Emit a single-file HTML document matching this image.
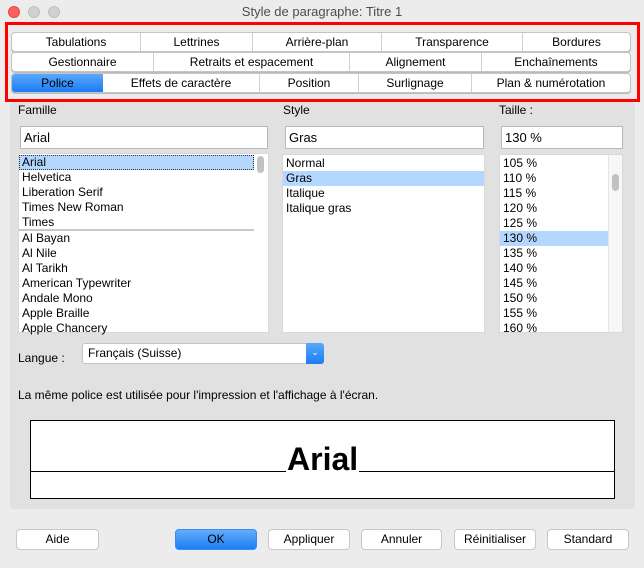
<!DOCTYPE html>
<html><head><meta charset="utf-8"><style>
*{box-sizing:border-box;margin:0;padding:0}
body{width:644px;height:568px;background:#ececec;font-family:"Liberation Sans",Arial,sans-serif;font-size:12px;color:#000;position:relative;overflow:hidden}
.a{position:absolute}
.title{left:0;top:0;width:644px;height:22px;text-align:center;line-height:24px;font-size:13px;color:#4d4d4d}
.dot{width:12px;height:12px;border-radius:50%;top:6px;background:#d0d0d0;border:1px solid #c0c0c0}
.red{left:5px;top:22px;width:635px;height:80px;border:3px solid #f00}
.row{left:11px;width:620px;height:20px;background:#fff;border:1px solid #c4c4c4;border-radius:4px;display:flex;overflow:hidden;box-shadow:0 1px 0 #bbb}
.row div{height:100%;text-align:center;line-height:18px;font-size:12px;border-right:1px solid #d0d0d0}
.row div:last-child{border-right:none}
.panel{left:10px;top:102px;width:625px;height:407px;background:#e1e1e1;border-radius:3px}
.in{background:#fff;border:1px solid #b8b8b8;height:23px;line-height:21px;padding-left:3px;font-size:13px}
.list{background:#fff;border:1px solid #d8d8d8}
.it{height:15px;line-height:15px;padding-left:3px;font-size:12px;white-space:nowrap}
.sel{background:#b3d7ff}
.btn{top:529px;height:21px;background:#fff;border:1px solid #c8c8c8;border-radius:4px;text-align:center;line-height:19px;font-size:12px}
</style></head><body>
<div class="a title">Style de paragraphe: Titre 1</div>
<div class="a dot" style="left:8px;background:#fc605c;border-color:#de4a45"></div>
<div class="a dot" style="left:28px"></div>
<div class="a dot" style="left:48px"></div>

<div class="a panel"></div>
<div class="a red"></div>
<div class="a row" style="top:32px"><div style="width:129px">Tabulations</div><div style="width:112px">Lettrines</div><div style="width:129px">Arrière-plan</div><div style="width:141px">Transparence</div><div style="flex:1">Bordures</div></div>
<div class="a row" style="top:52px"><div style="width:142px">Gestionnaire</div><div style="width:196px">Retraits et espacement</div><div style="width:132px">Alignement</div><div style="flex:1">Enchaînements</div></div>
<div class="a row" style="top:73px"><div style="width:91px;background:linear-gradient(#5aa8fb,#1a7cf5);color:#000;border-right:none">Police</div><div style="width:157px">Effets de caractère</div><div style="width:99px">Position</div><div style="width:113px">Surlignage</div><div style="flex:1">Plan &amp; numérotation</div></div>

<div class="a" style="left:18px;top:103px">Famille</div>
<div class="a" style="left:283px;top:103px">Style</div>
<div class="a" style="left:499px;top:103px">Taille :</div>

<div class="a in" style="left:20px;top:126px;width:248px">Arial</div>
<div class="a in" style="left:285px;top:126px;width:199px">Gras</div>
<div class="a in" style="left:501px;top:126px;width:122px">130 %</div>

<div class="a list" style="left:18px;top:153px;width:251px;height:180px;padding-top:1px">
<div class="it sel" style="width:235px;outline:1px dotted #333;outline-offset:-1px">Arial</div>
<div class="it">Helvetica</div><div class="it">Liberation Serif</div><div class="it">Times New Roman</div><div class="it" style="border-bottom:2px solid #c8c8c8;width:235px;height:16px">Times</div>
<div class="it">Al Bayan</div><div class="it">Al Nile</div><div class="it">Al Tarikh</div><div class="it">American Typewriter</div><div class="it">Andale Mono</div><div class="it">Apple Braille</div><div class="it">Apple Chancery</div>
<div class="a" style="left:238px;top:2px;width:7px;height:17px;border-radius:4px;background:#c1c1c1"></div>
</div>
<div class="a list" style="left:282px;top:154px;width:203px;height:179px;padding-top:1px">
<div class="it">Normal</div><div class="it sel">Gras</div><div class="it">Italique</div><div class="it">Italique gras</div>
</div>
<div class="a list" style="left:499px;top:154px;width:124px;height:179px;padding-top:1px;overflow:hidden">
<div class="it">105 %</div><div class="it">110 %</div><div class="it">115 %</div><div class="it">120 %</div><div class="it">125 %</div><div class="it sel" style="width:108px">130 %</div><div class="it">135 %</div><div class="it">140 %</div><div class="it">145 %</div><div class="it">150 %</div><div class="it">155 %</div><div class="it">160 %</div>
<div class="a" style="left:108px;top:0;width:15px;height:179px;background:#f7f7f7;border-left:1px solid #e6e6e6"></div>
<div class="a" style="left:112px;top:19px;width:7px;height:17px;border-radius:4px;background:#c1c1c1"></div>
</div>

<div class="a" style="left:18px;top:351px">Langue :</div>
<div class="a" style="left:82px;top:343px;width:242px;height:21px;background:#fff;border:1px solid #c4c4c4;border-radius:3px;line-height:19px;padding-left:5px">Français (Suisse)</div>
<div class="a" style="left:306px;top:343px;width:18px;height:21px;background:linear-gradient(#5aa8fb,#1a7cf5);border-radius:0 3px 3px 0;color:#fff;text-align:center;line-height:19px;font-size:9px">&#8964;</div>

<div class="a" style="left:18px;top:388px">La même police est utilisée pour l'impression et l'affichage à l'écran.</div>

<div class="a" style="left:30px;top:420px;width:585px;height:79px;background:#fff;border:1px solid #000"></div>
<div class="a" style="left:30px;top:471px;width:585px;height:1px;background:#000"></div>
<div class="a" style="left:286px;top:441px;height:32px;background:#fff;font-weight:bold;font-size:32px;line-height:36px;padding:0 1px">Arial</div>

<div class="a btn" style="left:16px;width:83px">Aide</div>
<div class="a btn" style="left:175px;width:82px;background:linear-gradient(#64adfb,#1b7df5);border-color:#3b8bf0">OK</div>
<div class="a btn" style="left:268px;width:82px">Appliquer</div>
<div class="a btn" style="left:361px;width:81px">Annuler</div>
<div class="a btn" style="left:454px;width:82px">Réinitialiser</div>
<div class="a btn" style="left:547px;width:82px">Standard</div>
</body></html>
